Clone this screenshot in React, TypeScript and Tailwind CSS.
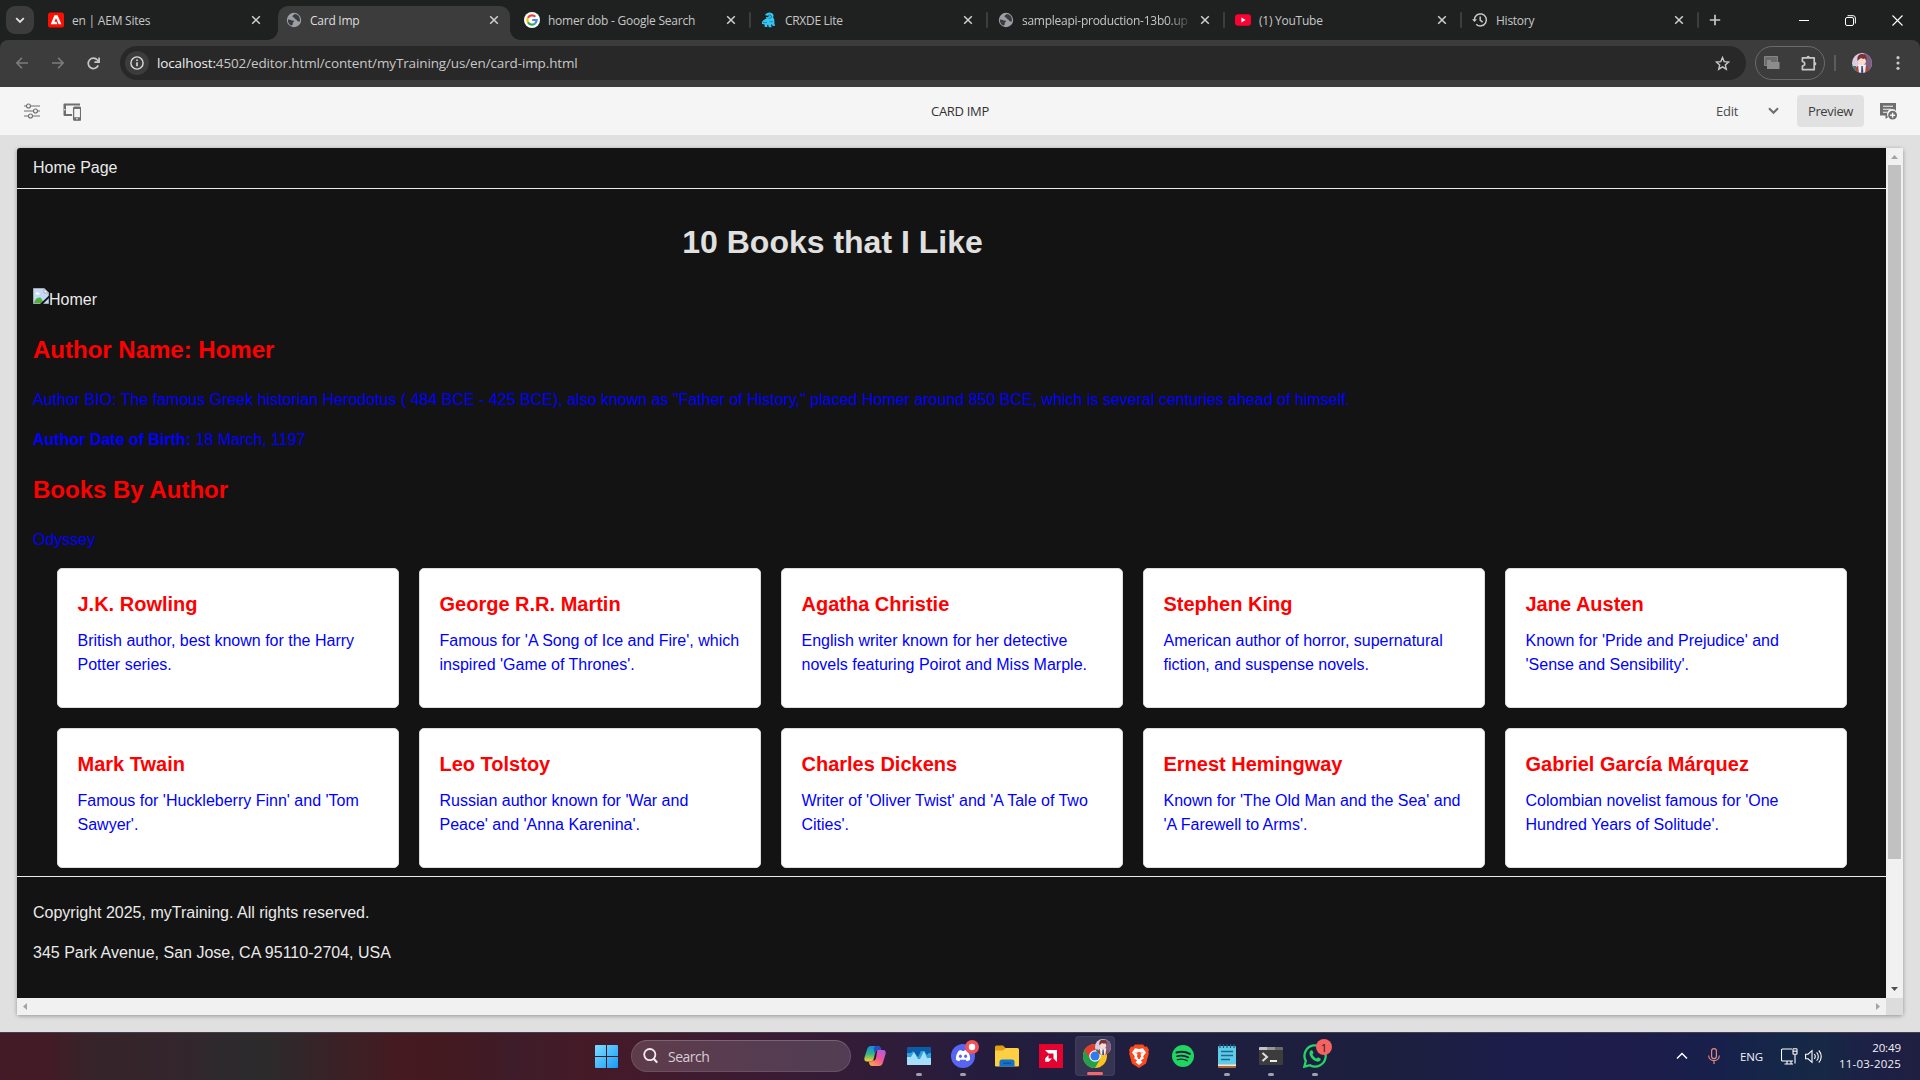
import React from "react";

const ui = "font-['Open_Sans','Noto_Sans',sans-serif]";

function Globe() {
  return (
    <svg width="16" height="16" viewBox="0 0 16 16">
      <circle cx="8" cy="8" r="7.2" fill="#9aa0a6" />
      <path d="M2 7.6 C4 7 5 8.6 7 8.6 C8.6 8.6 8.3 10.4 6.8 10.4 L6.8 12 C6.8 13 5.8 13.4 5 13.6 C2.8 12.4 1.6 10 2 7.6Z" fill="#3c3c3c" />
      <path d="M8.6 2 C8 3.2 6.6 3 6.6 4.4 C6.6 5.8 8.8 5 8.8 6.4 C8.8 7.6 11 7 11 8.6 C11 9.6 12.6 9.2 13.6 9.8 C15 6 12.4 2.2 8.6 2Z" fill="#3c3c3c" />
    </svg>
  );
}

function AdobeFav() {
  return (
    <svg width="16" height="16" viewBox="0 0 16 16">
      <rect y="0.5" width="16" height="15" rx="2.6" fill="#fa0f00" />
      <path d="M6.4 3.2h3.2L13.4 12.2h-2.7L8 6.1 6.5 9.7h2l.9 2.5H2.7Z" fill="#fff" />
    </svg>
  );
}

function GoogleFav() {
  return (
    <svg width="16" height="16" viewBox="0 0 16 16">
      <circle cx="8" cy="8" r="8" fill="#fff" />
      <g fill="none" strokeWidth="2.2">
        <path d="M11.4 4.7A4.7 4.7 0 0 0 3.9 5.8" stroke="#ea4335" />
        <path d="M3.9 5.8a4.7 4.7 0 0 0 0 4.5" stroke="#fbbc05" />
        <path d="M3.9 10.3a4.7 4.7 0 0 0 7.2 1.2" stroke="#34a853" />
        <path d="M11.1 11.5A4.7 4.7 0 0 0 12.6 8H8.2" stroke="#4285f4" />
      </g>
    </svg>
  );
}

function CrxFav() {
  return (
    <svg width="16" height="16" viewBox="0 0 16 16">
      <path d="M4 3.2C5 .8 8.6-.2 11 1.2c1.6.8 2 2.6 1 4 1.4 1.6 1.6 4 1.3 6l.9 2.6-2.4.2-.8-1.6-1 .2.6 2.6H7.9l-.8-2.4-1 .1.3 2H3.8l-.4-2.6L.8 12l.4-2.4L3 7.8l2.6-1.3L4.7 5l1.9.2 1.4-1L6 3.4Z" fill="#35c5f0" />
      <path d="M7 3.4c2-1 4 .1 3.4 1.8-.4 1-1.8 1.4-2.8 1" stroke="#12688c" strokeWidth=".9" fill="none" />
      <path d="M2 10.5h4M8.6 9.6h3.4" stroke="#1787b5" strokeWidth=".9" />
    </svg>
  );
}

function YtFav() {
  return (
    <svg width="16" height="16" viewBox="0 0 16 16">
      <rect y="2.3" width="16" height="11.4" rx="3" fill="#ff0033" />
      <path d="M6.4 5.6v4.8L10.6 8Z" fill="#fff" />
    </svg>
  );
}

function HistoryFav() {
  return (
    <svg width="16" height="16" viewBox="0 0 16 16" fill="none" stroke="#c7c7c7" strokeWidth="1.5">
      <path d="M2.4 8A6 6 0 1 1 4.2 12.2" />
      <path d="M0 7.2h5L2.5 10Z" fill="#c7c7c7" stroke="none" />
      <path d="M8.2 4.6V8.2l2.4 2" />
    </svg>
  );
}

const tabs = [
  { title: "en | AEM Sites", icon: <AdobeFav />, track: "tracking-[-0.22px]" },
  { title: "Card Imp", icon: <Globe />, active: true, track: "tracking-[-0.25px]" },
  { title: "homer dob - Google Search", icon: <GoogleFav />, sep: true, track: "tracking-[-0.24px]" },
  { title: "CRXDE Lite", icon: <CrxFav />, sep: true, track: "tracking-[-0.3px]" },
  { title: "sampleapi-production-13b0.up", icon: <Globe />, sep: true, fade: true, track: "tracking-[-0.26px]" },
  { title: "(1) YouTube", icon: <YtFav />, sep: true, track: "tracking-[-0.25px]" },
  { title: "History", icon: <HistoryFav />, sep: true, track: "tracking-[-0.25px]" },
];

function TabStrip() {
  return (
    <div className="flex h-10 bg-[#1f2120] items-center">
      <div className="ml-[6px] mr-[5px] h-7 w-7 rounded-[9px] bg-[#3c3c3c] grid place-items-center shrink-0">
        <svg width="10" height="7" viewBox="0 0 10 7" fill="none" stroke="#e3e3e3" strokeWidth="1.8"><path d="M1.2 1.2 5 5l3.8-3.8" /></svg>
      </div>
      {tabs.map((t, i) => (
        <div key={t.title} className="relative h-10 w-[237px] shrink-0">
          {t.active && (
            <div className="absolute left-[2px] right-[3px] top-[6px] bottom-0 rounded-t-[10px] bg-[#3c3c3c]">
              <div className="absolute -left-[10px] bottom-0 size-[10px] bg-[radial-gradient(circle_at_0_0,transparent_9.5px,#3c3c3c_10px)]" />
              <div className="absolute -right-[10px] bottom-0 size-[10px] bg-[radial-gradient(circle_at_100%_0,transparent_9.5px,#3c3c3c_10px)]" />
            </div>
          )}
          <div className={`relative flex h-full items-center ${i === 0 ? "pl-[9px] pr-[15px]" : i === 1 ? "pl-[10px] pr-[14px]" : "pl-[11px] pr-[14px]"}`}>
            <div className="shrink-0 w-4">{t.icon}</div>
            <div className={`ml-2 mt-[2px] flex-1 whitespace-nowrap text-[12px] ${t.track} ${t.active ? "text-[#dedede]" : "text-[#c7c7c7]"} ${t.fade ? "[mask-image:linear-gradient(90deg,#000_145px,transparent_172px)]" : ""}`}>
              {t.title}
            </div>
            <svg width="10" height="10" viewBox="0 0 10 10" stroke="#d0d0d0" strokeWidth="1.5" className="shrink-0"><path d="M1.2 1.2l7.6 7.6M8.8 1.2 1.2 8.8" /></svg>
          </div>
          {t.sep && <div className="absolute -right-px top-3 h-4 w-[2px] rounded bg-[#3c3d3c]" />}
        </div>
      ))}
      <svg width="12" height="12" viewBox="0 0 12 12" stroke="#c7c7c7" strokeWidth="1.7" className="ml-[11px]"><path d="M6 .8v10.4M.8 6h10.4" /></svg>
      <div className="flex-1" />
      <svg width="10" height="10" viewBox="0 0 10 10" stroke="#fff" className="mr-9"><path d="M0 5.5h10" /></svg>
      <svg width="11" height="11" viewBox="0 0 11 11" stroke="#fff" fill="none" className="mr-9"><rect x=".5" y="2.5" width="8" height="8" rx="1.5" /><path d="M2.5.7H8A2.4 2.4 0 0 1 10.4 3v5.5" /></svg>
      <svg width="11" height="11" viewBox="0 0 11 11" stroke="#fff" strokeWidth="1.1" className="mr-[17px]"><path d="M.5.5l10 10M10.5.5l-10 10" /></svg>
    </div>
  );
}

function Avatar({ size }: { size: number }) {
  return (
    <svg width={size} height={size} viewBox="0 0 20 20" className="rounded-full">
      <rect width="20" height="20" fill="#dccbe2" />
      <path d="M12 0h8v20h-8Z" fill="#7d5f86" />
      <path d="M2 20c0-5 3-8 8-8s8 3 8 8Z" fill="#a9473f" />
      <path d="M0 13h4v7H0Z" fill="#3f7d6c" />
      <path d="M6 11.5h8L13 20H7Z" fill="#f1eef2" />
      <path d="M9.4 13h1.4l.6 7H9Z" fill="#33477a" />
      <circle cx="10" cy="7.8" r="4" fill="#f6dccb" />
      <path d="M5.6 8C4.600 3 7 .8 10.6 1 14.2 1.200 15.400 4.600 14.300 8.200L13 5.400 11 6 9 4.900 7 6.600Z" fill="#7a3236" />
    </svg>
  );
}

function Toolbar() {
  return (
    <div className="bg-[#1f2120]">
      <div className="flex h-[47px] items-center rounded-t-[8px] bg-[#3c3c3c] pb-[1px]">
        <svg width="12" height="12" viewBox="0 0 12 12" stroke="#7c7c7c" strokeWidth="1.6" fill="none" className="ml-4"><path d="M12 6H1.2M6 .8.9 6 6 11.2" /></svg>
        <svg width="12" height="12" viewBox="0 0 12 12" stroke="#7c7c7c" strokeWidth="1.6" fill="none" className="ml-6"><path d="M0 6h10.8M6 .8 11.1 6 6 11.2" /></svg>
        <svg width="13" height="13" viewBox="0 0 13 13" stroke="#c7c7c7" strokeWidth="1.7" fill="none" className="ml-[23px]"><path d="M11.2 8.4A5.2 5.2 0 1 1 10.4 3L12 4.6M12.1.4v4.7H7.4" /></svg>
        <div className="ml-[20px] flex h-[34px] w-[1626px] items-center rounded-full bg-[#282828] pl-[5px] pr-[16px]">
          <div className="grid size-6 place-items-center rounded-full bg-[#3c3c3c]">
            <svg width="14" height="14" viewBox="0 0 14 14" fill="none" stroke="#dcdcdc" strokeWidth="1.4"><circle cx="7" cy="7" r="6.1" /><path d="M7 6.2v4.1M7 3.6v1.5" strokeWidth="1.6" /></svg>
          </div>
          <div className="ml-2 flex-1 whitespace-nowrap text-[13.5px] tracking-[-0.13px] text-[#c7c7c7]"><span className="text-[#eee]">localhost:</span>4502/editor.html/content/myTraining/us/en/card-imp.html</div>
          <svg width="15" height="15" viewBox="0 0 15 15" fill="none" stroke="#c7c7c7" strokeWidth="1.4"><path d="M7.5 1.6 9.2 5.6l4.4.4-3.3 2.9 1 4.3-3.8-2.3-3.8 2.3 1-4.3L1.4 6l4.4-.4Z" /></svg>
        </div>
        <div className="ml-[9px] flex h-[34px] w-[70px] items-center rounded-full border border-[#6a6a6a] pl-2 pr-[6px] justify-between">
          <svg width="16" height="14" viewBox="0 0 16 14"><path d="M.5.5h13v9H.5Z" fill="#6c6c6c" stroke="#858585" /><path d="M3 4h4v2h8.500v7H3Z" fill="#8c8c8c" /></svg>
          <svg width="17" height="17" viewBox="0 0 17 17" fill="none" stroke="#c7c7c7" strokeWidth="1.7"><path d="M1.400 2.900H13.200V14.700H1.400V11C4.500 10.500 4.500 7 1.400 6.500Z" strokeLinejoin="round" /><path d="M5.500 2.500a1.700 1.700 0 0 1 3.400 0ZM13.700 7a1.700 1.700 0 0 1 0 3.400Z" fill="#c7c7c7" stroke="none" /></svg>
        </div>
        <div className="ml-[9px] h-4 w-[2px] bg-[#5c5c5c]" />
        <div className="ml-4"><Avatar size={20} /></div>
        <svg width="4" height="14" viewBox="0 0 4 14" fill="#c7c7c7" className="ml-6"><circle cx="2" cy="1.700" r="1.600" /><circle cx="2" cy="7" r="1.600" /><circle cx="2" cy="12.300" r="1.600" /></svg>
      </div>
    </div>
  );
}

function EditorBar() {
  return (
    <div className="grid h-12 grid-cols-[1fr_auto_1fr] items-center bg-[#f5f5f5] text-[13px] text-[#4b4b4b]">
      <div className="flex items-center pl-6">
        <svg width="16" height="16" viewBox="0 0 16 16" fill="#f5f5f5" stroke="#6e6e6e" strokeWidth="1.1"><path d="M0 3h16M0 8h16M0 13h16" /><circle cx="4.500" cy="3" r="2" /><circle cx="11.500" cy="8" r="2" /><circle cx="6.500" cy="13" r="2" /></svg>
        <svg width="18" height="18" viewBox="0 0 18 18" className="ml-[23px] mt-px"><path d="M1.500.5H17v2H3v8.500h6v2H1.500A1 1 0 0 1 .5 12V1.500A1 1 0 0 1 1.500.5Z" fill="#6e6e6e" /><circle cx="1.800" cy="6.700" r=".8" fill="#f5f5f5" /><rect x="10.600" y="4.200" width="7" height="13" rx="1" fill="#f5f5f5" stroke="#6e6e6e" strokeWidth="1.300" /><path d="M10.500 14.200h7v3h-7ZM10.500 4h7v2h-7Z" fill="#6e6e6e" /><circle cx="14" cy="15.700" r=".8" fill="#f5f5f5" /></svg>
      </div>
      <div className="mt-[2px] text-[13px] tracking-[-0.3px] text-[#323232]">CARD IMP</div>
      <div className="flex items-center justify-end text-[13px]">
        <span className="mt-[2px] tracking-[-0.3px]">Edit</span>
        <svg width="11" height="8" viewBox="0 0 11 8" fill="none" stroke="#6e6e6e" strokeWidth="2" className="ml-[30px]"><path d="M1 1.300 5.500 5.800 10 1.300" /></svg>
        <div className="ml-[18px] grid h-8 w-[67px] place-items-center rounded-[4px] bg-[#e1e1e1] pt-[2px] text-[#3e3e3e] tracking-[-0.35px]">Preview</div>
        <svg width="18" height="18" viewBox="0 0 18 18" className="ml-4 mr-[22px]"><path d="M0 1h16v8a5 5 0 0 0-8 6.200L5.500 17v-3.500H0Z" fill="#6e6e6e" /><path d="M3 4.300h10M3 7.300h8M3 10.300h4" stroke="#f5f5f5" strokeWidth="1.100" /><circle cx="12.600" cy="13.200" r="4.400" fill="#6e6e6e" /><path d="M12.600 10.700v5M10.100 13.200h5" stroke="#f5f5f5" strokeWidth="1.400" /></svg>
      </div>
    </div>
  );
}

const authors = [
  ["J.K. Rowling", "British author, best known for the Harry Potter series."],
  ["George R.R. Martin", "Famous for 'A Song of Ice and Fire', which inspired 'Game of Thrones'."],
  ["Agatha Christie", "English writer known for her detective novels featuring Poirot and Miss Marple."],
  ["Stephen King", "American author of horror, supernatural fiction, and suspense novels."],
  ["Jane Austen", "Known for 'Pride and Prejudice' and 'Sense and Sensibility'."],
  ["Mark Twain", "Famous for 'Huckleberry Finn' and 'Tom Sawyer'."],
  ["Leo Tolstoy", "Russian author known for 'War and Peace' and 'Anna Karenina'."],
  ["Charles Dickens", "Writer of 'Oliver Twist' and 'A Tale of Two Cities'."],
  ["Ernest Hemingway", "Known for 'The Old Man and the Sea' and 'A Farewell to Arms'."],
  ["Gabriel García Márquez", "Colombian novelist famous for 'One Hundred Years of Solitude'."],
];

function Page() {
  return (
    <div className="h-[850px] w-[1869px] overflow-hidden rounded-tl-[3px] bg-[#131313] font-['Liberation_Sans',Arial,sans-serif] text-[16px] leading-[24px] text-[#eaeaea]">
      <div className="h-[41px] border-b border-[#eaeaea] px-4 pt-2">Home Page</div>
      <div className="px-4 pt-[29px]">
        <h1 className="w-[1599px] text-center text-[32px] font-bold leading-[48px] text-[#e0e0e0]">10 Books that I Like</h1>
        <div className="mt-[22px] flex h-6">
          <svg width="16" height="16" viewBox="0 0 16 16">
            <path d="M.5.5H11L15.500 5v10.500H.5Z" fill="#c3d9f7" stroke="#a3a8ae" />
            <path d="M11 .5V5h4.500Z" fill="#fff" stroke="#a3a8ae" />
            <path d="M2.500 5.500c.4-1.600 2.800-1.800 3.200-.6 1.400 0 1.400 1.600.3 1.600h-3Z" fill="#fff" />
            <path d="M1 15c1-4 4-6.500 7-5l3 5Z" fill="#4eaf3c" />
            <path d="M16 7.500v2.500l-6 6H7Z" fill="#131313" />
          </svg>
          <span>Homer</span>
        </div>
        <h2 className="mt-5 text-[24px] font-bold leading-9 text-[#ff0000]">Author Name: Homer</h2>
        <p className="mt-5 text-[#0000ff]">Author BIO: The famous Greek historian Herodotus ( 484 BCE - 425 BCE), also known as "Father of History," placed Homer around 850 BCE, which is several centuries ahead of himself.</p>
        <p className="mt-4 text-[#0000ff]"><b>Author Date of Birth:</b> 18 March, 1197</p>
        <h2 className="mt-5 text-[24px] font-bold leading-9 text-[#ff0000]">Books By Author</h2>
        <p className="mt-5 text-[#0000ff]">Odyssey</p>
      </div>
      <div className="ml-10 mt-4 grid grid-cols-[repeat(5,342px)] gap-5">
        {authors.map(([name, bio]) => (
          <div key={name} className="h-[140px] rounded-[5px] border border-[#dddddd] bg-white py-5 pl-[19.5px] pr-5">
            <h3 className="text-[20px] font-bold leading-[30px] text-[#ff0000]">{name}</h3>
            <p className="mt-2.5 text-[#0000ff]">{bio}</p>
          </div>
        ))}
      </div>
      <div className="mt-2 border-t border-[#eaeaea] px-4 pt-6">
        <p>Copyright 2025, myTraining. All rights reserved.</p>
        <p className="mt-4">345 Park Avenue, San Jose, CA 95110-2704, USA</p>
      </div>
    </div>
  );
}

function Frame() {
  return (
    <div className="h-[897px] bg-[#e0e0e0] pl-[17px] pt-[13px]">
      <div className="grid w-[1886px] grid-cols-[1869px_17px] grid-rows-[850px_17px] rounded-[3px] shadow-[0_1px_4px_rgba(0,0,0,0.35)]">
        <Page />
        <div className="flex flex-col items-center bg-[#f1f1f1] pt-[7px]">
          <svg width="7" height="4" viewBox="0 0 7 4"><path d="M3.500 0 7 4H0Z" fill="#a3a3a3" /></svg>
          <div className="mt-[6px] h-[694px] w-[13px] bg-[#c1c1c1]" />
          <div className="flex-1" />
          <svg width="7" height="4" viewBox="0 0 7 4" className="mb-[7px]"><path d="M0 0h7L3.500 4Z" fill="#505050" /></svg>
        </div>
        <div className="flex items-center justify-between bg-[#f1f1f1] px-[6px]">
          <svg width="4" height="7" viewBox="0 0 4 7"><path d="M4 0v7L0 3.500Z" fill="#a3a3a3" /></svg>
          <svg width="4" height="7" viewBox="0 0 4 7"><path d="M0 0v7l4-3.500Z" fill="#a3a3a3" /></svg>
        </div>
        <div className="bg-[#dcdcdc]" />
      </div>
    </div>
  );
}

function Copilot() {
  return (
    <svg width="24" height="24" viewBox="0 0 24 24">
      <defs>
        <linearGradient id="cpa" x1="0" y1="0" x2="0" y2="1"><stop offset="0" stopColor="#1a86e8" /><stop offset=".5" stopColor="#2fb58a" /><stop offset="1" stopColor="#ffd02b" /></linearGradient>
        <linearGradient id="cpb" x1="1" y1="0" x2=".2" y2="1"><stop offset="0" stopColor="#a45cf0" /><stop offset=".5" stopColor="#f0549a" /><stop offset="1" stopColor="#ffa24a" /></linearGradient>
      </defs>
      <path d="M8 2h7c1.600 0 2.300 1.200 2.700 2.500L18.200 6H15c-1.500 0-2.200.8-2.600 2.200L10.500 15c-.5 1.700-1.500 2.500-3.200 2.500H4c-2.400 0-3.200-1.700-2.500-4L4 5.500C4.700 3.200 5.700 2 8 2Z" fill="url(#cpa)" />
      <path d="M12.500 2H15c1.600 0 2.300 1.200 2.700 2.500L18.200 6H15c-1.500 0-2.200.8-2.600 2.200L11.800 10 10.500 4Z" fill="#1b55c4" />
      <path d="M16 22H9c-1.600 0-2.300-1.200-2.700-2.500l-.6-2h2c1.600 0 2.600-.7 3-2.200L12.800 8c.4-1.400 1.200-2 2.600-2H20c2.400 0 3.200 1.900 2.500 4.200L20 18.500c-.7 2.300-1.700 3.500-4 3.500Z" fill="url(#cpb)" />
      <path d="M11.200 13.500 12.800 8c.3-1 .8-1.600 1.600-1.900L13 14c-.3 1.400-1 2.300-2.300 3Z" fill="#241b39" />
    </svg>
  );
}

function Monitor() {
  return (
    <svg width="24" height="18" viewBox="0 0 24 18">
      <rect width="24" height="18" rx="1" fill="#0c5da8" />
      <path d="M0 6h4l2-2 5 6 3-6h3l3 4 2-2h2v12H0Z" fill="#2fa2de" />
      <path d="M0 10h4l3-5 4 7h2l4-8 3 7h4v6a1 1 0 0 1-1 1H1a1 1 0 0 1-1-1Z" fill="#a5dffb" />
    </svg>
  );
}

function Discord() {
  return (
    <svg width="28" height="30" viewBox="0 0 28 30">
      <circle cx="12" cy="17" r="12" fill="#5865f2" />
      <path d="M7.500 12c1-.5 2-.8 2.800-.9l.5 1h2.400l.5-1c.9.1 1.900.4 2.800.9 2 2.800 2.800 5.800 2.600 8.700-1.200.9-2.300 1.300-3.400 1.600l-.9-1.500H9.200l-.9 1.500c-1.100-.3-2.200-.7-3.400-1.600C4.700 17.800 5.500 14.800 7.500 12Z" fill="#fff" />
      <ellipse cx="9.400" cy="17.300" rx="1.500" ry="1.700" fill="#5865f2" /><ellipse cx="14.600" cy="17.300" rx="1.500" ry="1.700" fill="#5865f2" />
      <circle cx="21" cy="8" r="7" fill="#f0535a" /><circle cx="21" cy="8" r="3.200" fill="#fff" />
    </svg>
  );
}

function Explorer() {
  return (
    <svg width="24" height="22" viewBox="0 0 24 22">
      <path d="M0 2a1.500 1.500 0 0 1 1.500-1.500H8L10.500 3v4H0Z" fill="#e0a010" />
      <path d="M0 5.500h8L10.500 3H22.500A1.500 1.500 0 0 1 24 4.500v16a1 1 0 0 1-1 1H1a1 1 0 0 1-1-1Z" fill="#fccf45" />
      <path d="M4.500 21.500V17A2.500 2.500 0 0 1 7 14.500H17A2.500 2.500 0 0 1 19.500 17v4.500Z" fill="#1173c9" />
      <path d="M8 18.200h8" stroke="#0b4c93" />
    </svg>
  );
}

function Amd() {
  return (
    <svg width="24" height="24" viewBox="0 0 24 24">
      <rect width="24" height="24" fill="#e4032e" />
      <path d="M6 6h12v12l-3.500-3.500V9.500H9.500Z" fill="#fff" /><path d="M9.500 11V14.500H13L9.800 17.800H6.200v-3.500Z" fill="#fff" />
    </svg>
  );
}

function Chrome() {
  return (
    <svg width="24" height="24" viewBox="0 0 24 24">
      <circle cx="12" cy="12" r="12" fill="#fcc31e" />
      <path d="M12 12 1.600 6A12 12 0 0 0 12 24l5.200-9Z" fill="#1ea24a" />
      <path d="M1.600 6a12 12 0 0 1 20.800 0H12v6l-5.200 3Z" fill="#e33b2e" />
      <circle cx="12" cy="12" r="5.800" fill="#fff" /><circle cx="12" cy="12" r="4.600" fill="#2f7bed" />
    </svg>
  );
}

function Brave() {
  return (
    <svg width="20" height="24" viewBox="0 0 20 24">
      <path d="M6 .5h8L16 2.700l2-.2L20 6l-.7 2 .5 1.500L17 19.500 10 24l-7-4.500L.2 9.500.7 8 0 6l2-3.500 2 .2Z" fill="#fb4a1d" />
      <path d="M6 4.200 10 5l4-.8L17 8.500l-2.800 3.800.6 2.200-3 1.700 1.700 2L10 21l-3.500-2.800 1.700-2-3-1.700.6-2.200L3 8.500Z" fill="#fff" />
      <path d="M5 8.500 8.500 9.700 8 12.500 9.300 15h1.400l1.300-2.500-.5-2.800L15 8.500l-2.500.2L10 8l-2.500.7Z" fill="#fb4a1d" />
    </svg>
  );
}

function Spotify() {
  return (
    <svg width="22" height="22" viewBox="0 0 22 22" fill="none" stroke="#1c1e3a" strokeLinecap="round">
      <circle cx="11" cy="11" r="11" fill="#1ed760" stroke="none" />
      <path d="M4.500 7.500c4.500-1.300 9.500-.8 13.300 1.300" strokeWidth="2.100" /><path d="M5 11.200c4-1.100 8-.6 11.400 1.200" strokeWidth="1.700" /><path d="M5.500 14.600c3.400-.9 6.700-.5 9.600 1.100" strokeWidth="1.400" />
    </svg>
  );
}

function Notepad() {
  return (
    <svg width="18" height="24" viewBox="0 0 18 24">
      <rect y="19" width="18" height="5" rx="1" fill="#b5672a" /><rect y="18" width="18" height="4" fill="#f3e9df" />
      <rect y="2" width="18" height="18.500" rx="1" fill="#5fcbe6" />
      <path d="M2 0v4M5.500 0v4M9 0v4M12.500 0v4M16 0v4" stroke="#1a5e80" strokeWidth="1.200" />
      <path d="M3 7.500h12M3 11.500h12M3 15.500h9" stroke="#156b92" strokeWidth="1.500" />
    </svg>
  );
}

function Terminal() {
  return (
    <svg width="24" height="18" viewBox="0 0 24 18">
      <rect width="24" height="18" rx="1" fill="#3c3c3c" /><path d="M0 3V1a1 1 0 0 1 1-1h15v3Z" fill="#c4c4c4" /><path d="M8 0h8v3H8Z" fill="#969696" /><path d="M16 0h7a1 1 0 0 1 1 1v2h-8Z" fill="#6b6b6b" />
      <path d="M3.500 6 8 10l-4.500 4" fill="none" stroke="#ddd" strokeWidth="2" /><path d="M11 14h7" stroke="#fff" strokeWidth="1.800" />
    </svg>
  );
}

function WhatsApp() {
  return (
    <svg width="24" height="24" viewBox="0 0 24 24">
      <path d="M1.300 22.700 2.800 17A10.600 10.600 0 1 1 7 21.200Z" fill="none" stroke="#25d366" strokeWidth="2.300" />
      <path d="M8.200 6.300c.8-.4 1.200 0 1.500.8l.7 1.700c.2.600-.6 1.200-1 1.700 1 2 2.500 3.300 4.300 4.100.6-.5 1-1.400 1.700-1.200l2 1c.6.400.3 2-.7 2.700-3.800 2.500-11-4-10.200-8.500.1-1 1-2 1.700-2.300Z" fill="#25d366" />
    </svg>
  );
}

function Cell({ children, run }: { children: React.ReactNode; run?: boolean }) {
  return (
    <div className="relative grid h-[46px] w-11 place-items-center">
      {children}
      {run && <div className="absolute bottom-[3px] left-[19px] h-[3px] w-[6px] rounded-full bg-[#a09fae]" />}
    </div>
  );
}

function Taskbar() {
  return (
    <div className="flex h-12 items-center border-t border-[#45404f] pb-px bg-[linear-gradient(90deg,#431b28_0px,#421b25_50px,#36242a_90px,#33262c_180px,#2d2a2d_230px,#2d2a2c_270px,#3a2126_340px,#451a20_400px,#431a21_460px,#3e1c29_510px,#451a27_590px,#3e1b30_700px,#331c37_850px,#251c3d_980px,#1f1e3f_1100px,#1d1f3f_1400px,#1c1d4b_1520px,#1e1c4a_1620px,#17204b_1720px,#152748_1780px,#172845_1820px,#1d1f45_1880px,#1f2040_1920px)] text-[#f2f2f4]">
      <svg width="23" height="23" viewBox="0 0 23 23" className="ml-[595px]">
        <defs><linearGradient id="win" x1="0" y1="0" x2="1" y2="1"><stop offset="0" stopColor="#7fdcff" /><stop offset="1" stopColor="#149cfa" /></linearGradient></defs>
        <path d="M0 1a1 1 0 0 1 1-1h10v11H0ZM12 0h10a1 1 0 0 1 1 1v10H12ZM0 12h11v11H1a1 1 0 0 1-1-1ZM12 12h11v10a1 1 0 0 1-1 1H12Z" fill="url(#win)" />
      </svg>
      <div className="ml-[13px] mr-[2px] flex h-8 w-[220px] items-center rounded-full border border-white/10 border-t-white/20 bg-white/15 pl-[11px]">
        <svg width="15" height="16" viewBox="0 0 15 16" fill="none" stroke="#f0ecf0" strokeWidth="1.800"><circle cx="6.800" cy="6.600" r="5.600" /><path d="M10.800 10.800 14.200 14.600" strokeWidth="2.100" /></svg>
        <span className="ml-[10px] text-[14px] tracking-[-0.5px] text-[#d6cdd6]">Search</span>
      </div>
      <Cell><Copilot /></Cell>
      <Cell run><Monitor /></Cell>
      <Cell run><div className="-mt-[5px] ml-[4px]"><Discord /></div></Cell>
      <Cell><Explorer /></Cell>
      <Cell><Amd /></Cell>
      <div className="relative mx-[2px] grid h-10 w-10 place-items-center rounded-[4px] border border-white/5 bg-white/10">
        <Chrome />
        <div className="absolute right-[3px] top-[2px]"><Avatar size={16} /></div>
        <div className="absolute bottom-0 left-[11px] h-[3px] w-4 rounded-full bg-[#f5686a]" />
      </div>
      <Cell><Brave /></Cell>
      <Cell><Spotify /></Cell>
      <Cell run><Notepad /></Cell>
      <Cell run><Terminal /></Cell>
      <Cell run>
        <WhatsApp />
        <div className="absolute left-[23px] top-[6px] grid size-4 place-items-center rounded-full bg-[#f5625f] text-[11px] leading-none text-[#1a1a1a]">1</div>
      </Cell>
      <div className="flex-1" />
      <svg width="12" height="8" viewBox="0 0 12 8" fill="none" stroke="#fff" strokeWidth="1.500"><path d="M1 6.500 6 1.500l5 5" /></svg>
      <svg width="12" height="16" viewBox="0 0 12 16" fill="none" stroke="#e08a80" strokeWidth="1.200" className="ml-5"><rect x="3.600" y=".6" width="4.800" height="10" rx="2.400" /><path d="M.7 7.500c0 6.800 10.600 6.800 10.600 0M6 12.800V16" /></svg>
      <span className="ml-5 w-6 pt-px text-[11.500px] tracking-[-0.1px]">ENG</span>
      <svg width="17" height="17" viewBox="0 0 17 17" fill="none" stroke="#fff" strokeWidth="1.100" className="ml-[17px]"><path d="M11 1H1.500a1 1 0 0 0-1 1v10a1 1 0 0 0 1 1H12M14 6.500V15.500M6 13v3M10 13v3M3.500 16h8.500" /><rect x="12" y=".8" width="4" height="5.500" rx=".6" /><path d="M12 3.200h4" /></svg>
      <svg width="17" height="15" viewBox="0 0 17 15" fill="none" stroke="#fff" strokeWidth="1.100" className="ml-[7px]"><path d="M.6 5.200h2.500L7 1.700v11.600L3.100 9.800H.6ZM9.300 5.200a3.200 3.200 0 0 1 0 4.600M11.600 3.300a6 6 0 0 1 0 8.400M13.800 1.500a8.700 8.700 0 0 1 0 12" /></svg>
      <div className="ml-[16px] mr-[19px] w-[63px] whitespace-nowrap text-right text-[11.500px] leading-[16px]"><div className="tracking-[-0.100px]">20:49</div><div className="tracking-[0.200px]">11-03-2025</div></div>
    </div>
  );
}

export default function App() {
  return (
    <div className={`h-[1080px] w-[1920px] overflow-hidden ${ui}`}>
      <TabStrip />
      <Toolbar />
      <EditorBar />
      <Frame />
      <Taskbar />
    </div>
  );
}
